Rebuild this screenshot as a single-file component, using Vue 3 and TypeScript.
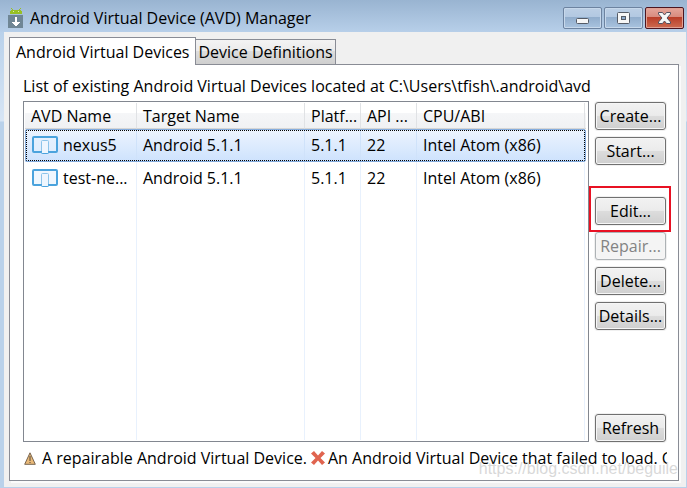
<script setup lang="ts">
import { ref } from 'vue'

interface Avd {
  name: string
  target: string
  platform: string
  api: string
  cpu: string
}

interface Action {
  label: string
  disabled?: boolean
  group?: 'gap' | 'last'
  marked?: boolean
}

const avds: Avd[] = [
  { name: 'nexus5', target: 'Android 5.1.1', platform: '5.1.1', api: '22', cpu: 'Intel Atom (x86)' },
  { name: 'test-ne...', target: 'Android 5.1.1', platform: '5.1.1', api: '22', cpu: 'Intel Atom (x86)' },
]

const headings = ['AVD Name', 'Target Name', 'Platf...', 'API ...', 'CPU/ABI']

const actions: Action[] = [
  { label: 'Create...' },
  { label: 'Start...' },
  { label: 'Edit...', group: 'gap', marked: true },
  { label: 'Repair...', disabled: true },
  { label: 'Delete...' },
  { label: 'Details...' },
  { label: 'Refresh', group: 'last' },
]

const tabs = ['Android Virtual Devices', 'Device Definitions']
const activeTab = ref(0)
const selected = ref(0)
</script>

<template>
  <div class="window">
    <header class="titlebar">
      <svg class="app-icon" viewBox="0 0 16 20" aria-hidden="true">
        <path d="M3 0h1v1h1v1h6v-1h1v-1h1v1h-1v1h1v1h1v3H2v-3h1v-1h1v-1h-1z" fill="#97c024" />
        <path d="M5 3h1v1h-1zM10 3h1v1h-1z" fill="#dcebb4" />
        <rect x="0" y="7" width="15" height="13" fill="#6f8695" />
        <path d="M7 9h2v5h3v1h-1v1h-1v1h-1v1h-2v-1h-1v-1h-1v-1h-1v-1h3z" fill="#fff" />
      </svg>
      <h1 class="title">Android Virtual Device (AVD) Manager</h1>
      <div class="window-buttons">
        <button type="button" class="wbtn" aria-label="Minimize">
          <svg viewBox="0 0 37 20"><rect x="12.5" y="10.5" width="12" height="5" rx="1" fill="#f6f6f6" stroke="#555b66" /></svg>
        </button>
        <button type="button" class="wbtn" aria-label="Maximize">
          <svg viewBox="0 0 37 20">
            <rect x="12.5" y="4.5" width="12" height="11" rx="1" fill="#f6f6f6" stroke="#555b66" />
            <rect x="16.5" y="8.5" width="4" height="3" fill="#8eabcb" stroke="#555b66" />
          </svg>
        </button>
        <button type="button" class="wbtn close" aria-label="Close">
          <svg viewBox="0 0 37 20">
            <path d="M12.500 4.500h4l2 2.500 2-2.500h4v1.500l-3.500 4 3.500 4v1.500h-4l-2-2.500-2 2.500h-4v-1.500l3.500-4-3.500-4z" fill="#f6f6f6" stroke="#54505e" stroke-linejoin="round" />
          </svg>
        </button>
      </div>
    </header>

    <main class="client">
      <nav class="tabs" role="tablist">
        <button
          v-for="(tab, i) in tabs"
          :key="tab"
          type="button"
          role="tab"
          class="tab"
          :class="{ active: i === activeTab }"
          :aria-selected="i === activeTab"
          @click="activeTab = i"
        >{{ tab }}</button>
      </nav>

      <section class="page">
        <p class="intro">List of existing Android Virtual Devices located at C:\Users\tfish\.android\avd</p>
        <div class="content">
          <div class="list">
            <table>
              <colgroup>
                <col class="c-name" /><col class="c-target" /><col class="c-small" /><col class="c-small" /><col class="c-cpu" /><col />
              </colgroup>
              <thead>
                <tr>
                  <th v-for="h in headings" :key="h" scope="col">{{ h }}</th>
                  <td class="rest"></td>
                </tr>
              </thead>
              <tbody>
                <tr
                  v-for="(avd, i) in avds"
                  :key="avd.name"
                  class="row"
                  :class="{ selected: i === selected }"
                  @click="selected = i"
                >
                  <td>
                    <span class="device">
                      <svg class="device-icon" viewBox="0 0 26 18" aria-hidden="true">
                        <rect x="1" y="1" width="24" height="15" rx="1" fill="#e6f2fd" fill-opacity="0.6" stroke="#4ba3dd" stroke-width="2" />
                        <rect x="9.500" y="4.500" width="7" height="13" rx="1" fill="#eef6fe" stroke="#8cc4ea" />
                        <path d="M9.500 15v1.500q0 1 1 1h5q1 0 1-1v-1.500" fill="none" stroke="#4ba3dd" />
                      </svg>
                      {{ avd.name }}
                    </span>
                  </td>
                  <td>{{ avd.target }}</td>
                  <td>{{ avd.platform }}</td>
                  <td>{{ avd.api }}</td>
                  <td>{{ avd.cpu }}</td>
                  <td class="rest"></td>
                </tr>
                <tr class="filler"><td v-for="h in headings" :key="h"></td><td class="rest"></td></tr>
              </tbody>
            </table>
          </div>
          <div class="actions">
            <div
              v-for="a in actions"
              :key="a.label"
              class="action"
              :class="[a.group, { marked: a.marked }]"
            >
              <button type="button" class="btn" :disabled="a.disabled">{{ a.label }}</button>
            </div>
          </div>
        </div>
        <footer class="legend">
          <svg class="warn" viewBox="0 0 12 13" aria-hidden="true">
            <path d="M6 .8 11.300 12.300H.7z" fill="#e9b978" stroke="#77644f" />
            <path d="M6 4v5M6 10v1" stroke="#4f4438" />
          </svg>
          <span>A repairable Android Virtual Device.</span>
          <svg class="fail" viewBox="0 0 14 14" aria-hidden="true">
            <path d="M3 0 7 4.500 11 0l3 2.500L9.500 7 14 11.500 11 14 7 9.500 3 14 0 11.500 4.500 7 0 2.500z" fill="#e0644f" />
          </svg>
          <span>An Android Virtual Device that failed to load. C</span>
        </footer>
        <div class="watermark">https://blog.csdn.net/beguile</div>
      </section>
    </main>
  </div>
</template>

<style>
body {
  margin: 0;
}
</style>

<style scoped>
.window {
  box-sizing: border-box;
  min-height: 100vh;
  display: flex;
  flex-direction: column;
  padding: 0 1px 1px 4px;
  background: linear-gradient(#99b4d1 0, #b9d1ea 32px, #d7e5f5 121px, #b9d1ea 122px);
  font-family: "Open Sans", "Noto Sans", sans-serif;
  font-size: 16px;
  line-height: 20px;
  color: #000;
}
button {
  font: inherit;
  color: inherit;
  padding: 0;
  margin: 0;
}
.titlebar {
  height: 32px;
  margin: 0 -1px 0 -4px;
  padding: 0 3px 0 8px;
  display: flex;
  align-items: center;
  background: linear-gradient(#99b4d1, #b7cfe9);
}
.app-icon {
  width: 16px;
  height: 20px;
  margin-right: 6px;
  padding-top: 4px;
}
.title {
  margin: 0;
  padding-top: 4px;
  flex: 1;
  font-size: 16px;
  font-weight: 400;
}
.window-buttons {
  display: flex;
  gap: 2px;
  padding-top: 4px;
}
.wbtn {
  box-sizing: border-box;
  width: 39px;
  height: 22px;
  border: 1px solid #6d83a0;
  border-radius: 2px;
  background: linear-gradient(#bccfe5 0, #b2c8e1 45%, #91adcc 46%, #a9c3df 100%);
  box-shadow: inset 0 0 0 1px #c7d8eb;
}
.wbtn svg {
  display: block;
  width: 37px;
  height: 20px;
}
.close {
  border-color: #4c1520;
  background: linear-gradient(#e5a69b 0, #d88b7e 45%, #b93d28 46%, #cd6b51 100%);
  box-shadow: inset 0 0 0 1px #e0a093;
}
.client {
  flex: 1;
  display: flex;
  flex-direction: column;
  padding: 5px 7px 6px 5px;
  background: #f0f0f0;
}
.tabs {
  display: flex;
  align-items: flex-end;
}
.tab {
  box-sizing: border-box;
  height: 25px;
  padding: 0 2px;
  border: 1px solid #898c95;
  border-bottom: 0;
  border-left: 0;
  background: linear-gradient(#f3f3f3 0, #ebebeb 45%, #dddddd 46%, #cfcfcf 100%);
}
.tab.active {
  height: 28px;
  padding: 0 6px;
  border-left: 1px solid #898c95;
  background: #fff;
  margin-bottom: -1px;
  z-index: 1;
}
.page {
  position: relative;
  flex: 1;
  display: flex;
  flex-direction: column;
  padding: 11px 11px 11px 13px;
  border: 1px solid #898c95;
  background: #fff;
  box-shadow: 2px 2px 0 #fbfbfb;
}
.intro {
  margin: 0 0 5px;
  white-space: nowrap;
}
.content {
  flex: 1;
  display: flex;
  gap: 6px;
}
.list {
  flex: 1;
  display: flex;
  min-width: 0;
  padding: 1px;
  border: 1px solid #828790;
}
table {
  flex: 1;
  width: 100%;
  table-layout: fixed;
  border-collapse: separate;
  border-spacing: 0;
}
.c-name { width: 112px; }
.c-target,
.c-cpu { width: 168px; }
.c-small { width: 56px; }
th,
td {
  box-sizing: border-box;
  padding: 0 0 0 6px;
  border-right: 1px solid #e8f1fd;
  text-align: left;
  font-weight: 400;
  white-space: nowrap;
  overflow: hidden;
}
td.rest {
  padding: 0;
  border-right: 0;
}
thead th,
thead td {
  height: 26px;
  border-right-color: #e0e2e5;
  border-bottom: 1px solid #d5d5d5;
  background: linear-gradient(#fff 0, #fff 40%, #f5f6f8 41%, #f0f1f3 100%);
}
.row {
  position: relative;
}
.row td {
  height: 33px;
  padding-bottom: 2px;
}
.row.selected td {
  background: linear-gradient(#edf4fe, #cde2fd);
  border-right-color: #cfe2fa;
}
.row.selected td.rest {
  background: none;
}
.row.selected::after {
  content: "";
  position: absolute;
  inset: 1px 2px 1px 1px;
  border: 1px dotted #000;
  outline: 1px solid #84acdd;
  border-radius: 1px;
}
.filler td {
  height: auto;
}
.device {
  display: flex;
  align-items: center;
  gap: 5px;
  padding-left: 1px;
}
.device-icon {
  flex: none;
  width: 26px;
  height: 18px;
}
.actions {
  display: flex;
  flex-direction: column;
  gap: 7px;
  width: 72px;
}
.action {
  position: relative;
  height: 28px;
  padding-right: 1px;
}
.action:first-child {
  margin-top: 1px;
}
.action.gap {
  margin-top: 25px;
}
.action.last {
  margin-top: auto;
}
.action.marked::after {
  content: "";
  position: absolute;
  inset: -11px -4px -7px -6px;
  border: 2px solid #e81123;
  pointer-events: none;
  z-index: 1;
}
.btn {
  box-sizing: border-box;
  width: 100%;
  height: 28px;
  border: 1px solid #707070;
  border-radius: 3px;
  background: linear-gradient(#f2f2f2 0, #ebebeb 48%, #dddddd 49%, #cfcfcf 100%);
  box-shadow: inset 0 0 0 1px #f6f6f6, 0 0 0 1px #f0f0f0;
  white-space: nowrap;
}
.btn:disabled {
  border-color: #adb2b5;
  background: #f4f4f4;
  color: #838383;
}
.legend {
  display: flex;
  align-items: center;
  margin-top: 5px;
  height: 22px;
  width: 100%;
  min-width: 0;
  overflow: hidden;
  white-space: nowrap;
  contain: inline-size;
}
.legend span {
  flex: none;
}
.warn {
  flex: none;
  width: 12px;
  height: 13px;
  margin: 0 6px 0 1px;
}
.fail {
  flex: none;
  width: 14px;
  height: 14px;
  margin: 0 3px 0 4px;
}
.watermark {
  position: absolute;
  right: 0;
  bottom: 1px;
  font-family: "Liberation Sans", Arial, sans-serif;
  font-size: 16px;
  color: rgba(190, 190, 190, 0.6);
  pointer-events: none;
}
</style>
